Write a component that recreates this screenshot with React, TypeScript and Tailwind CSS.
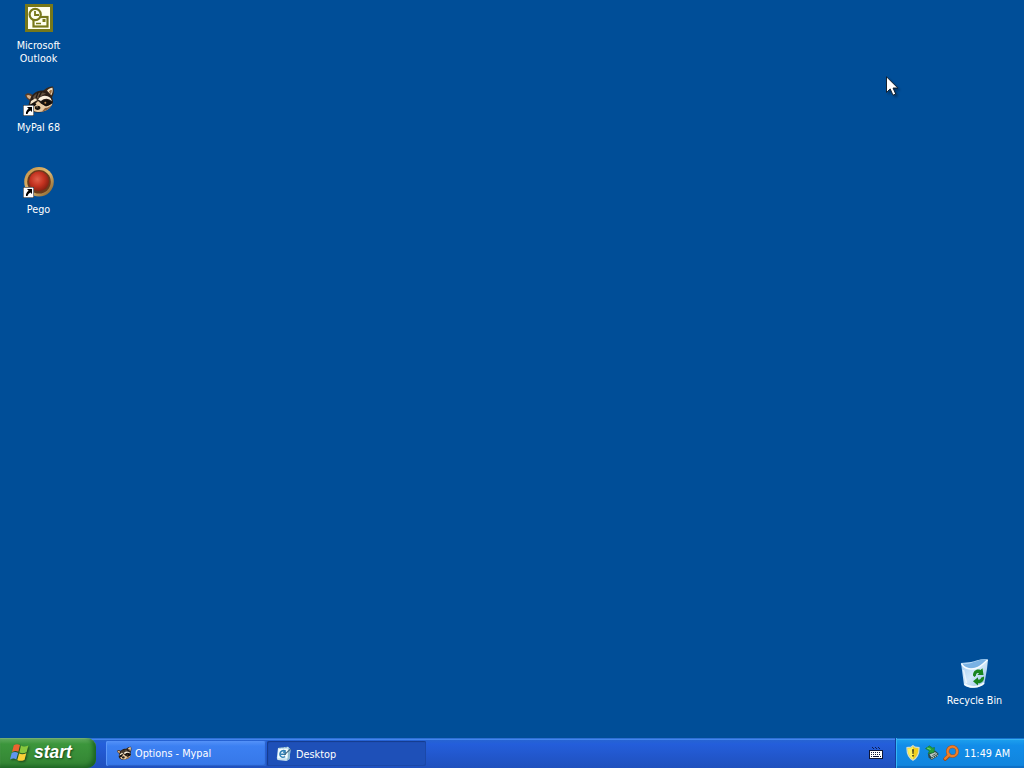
import type { ReactNode } from 'react';

const UI_FONT = "font-['DejaVu_Sans_Condensed','DejaVu_Sans',sans-serif] [font-stretch:condensed]";

function ShortcutArrow() {
  return (
    <g>
      <rect x="0" y="20" width="11" height="11" fill="#1c2530" />
      <rect x="0.6" y="20.6" width="9.8" height="9.8" fill="#fff" />
      <path d="M4 22h5v5l-1.6-1.5C5.8 26.3 4.8 27.4 4.6 29H3C2.7 27 3.6 25 5.6 23.7z" fill="#000" />
    </g>
  );
}

function OutlookIcon() {
  return (
    <svg width="32" height="32" viewBox="0 0 32 32">
      <rect x="2" y="1" width="28" height="28" fill="#77781a" />
      <rect x="5" y="4" width="22" height="22" fill="#fffff0" />
      <rect x="10.5" y="14" width="14" height="9.5" fill="#fffff0" stroke="#77781a" strokeWidth="2.2" />
      <rect x="19.5" y="16" width="3" height="3" fill="#77781a" />
      <path d="M13 20.5h5" stroke="#77781a" strokeWidth="1.5" />
      <circle cx="12.2" cy="11.5" r="5.6" fill="#fffff0" stroke="#77781a" strokeWidth="2.2" />
      <path d="M12 8v4h4" fill="none" stroke="#77781a" strokeWidth="1.8" />
    </svg>
  );
}

function RaccoonArt() {
  return (
    <g>
      {/* ears */}
      <path d="M2 10C4 7 8 8 11 11L9 17C6 15 3 14 2 10z" fill="#5b3d26" />
      <path d="M3.5 10.5C5.5 9 8 10.5 9 12.5L7.5 14.5C5.5 13.5 4 12.5 3.5 10.5z" fill="#d9b186" />
      <path d="M20 6C22 3.5 26 1 30 1.5 31.5 6 31 10 28.5 13z" fill="#3a281a" />
      <path d="M24 5.5C26 3.5 28 2.5 29.5 2.7 30 6 29.5 8.5 28 10.5z" fill="#f1dfc0" />
      <path d="M26 6.5C27 5.2 28 4.8 28.8 5 28.9 7 28.4 8.5 27.6 9.3z" fill="#9c6b3b" />
      {/* head */}
      <path d="M7 15C8 9 14 5 20 5.5 26 6 30 11 30 17 29 23 23 27 15 27.5 9 27.5 5 24 5.5 20z" fill="#2b2019" />
      <path d="M10 12C13 7.5 19 6.5 23 8.5L20 10 16 12.5 11 15z" fill="#61503f" />
      <path d="M15 7.5L13 13M18.5 7L16 12" stroke="#211912" strokeWidth="1.3" />
      {/* brow stripes */}
      <path d="M8 16L12 13.5 14.5 15 11 17 7 20z" fill="#f3e4cb" />
      <path d="M15 14.5C18 10.5 23 9.5 27.5 13L29 16C26 13.2 21.5 12.5 18 16z" fill="#faf0de" />
      {/* muzzle and cheeks */}
      <path d="M11 20L15 16 18 18.5 23 21.5 29.5 18.5C28 23.5 23 26.5 16 27 12 27 9 25.5 8.5 23z" fill="#e8caa2" />
      <path d="M22 23C25 23 27 21.5 29 19.5 27.5 23 24 25.8 19 26.5z" fill="#8b603e" />
      {/* mask */}
      <path d="M17.5 18C20 14 25.5 13.5 29 17.5 27.5 20 25 21.5 22.5 21z" fill="#15100d" />
      <path d="M7 19.5L11.5 17.5 13.5 19.5 10.5 22 7.5 22z" fill="#15100d" />
      <circle cx="22.3" cy="17.8" r="1" fill="#c28c50" />
      <ellipse cx="14.6" cy="22.8" rx="2.8" ry="2.1" fill="#17120e" />
      <path d="M13.3 21.9h1.6" stroke="#c4a886" strokeWidth="0.8" />
    </g>
  );
}

function MyPalIcon() {
  return (
    <svg width="32" height="32" viewBox="0 0 32 32">
      <RaccoonArt />
      <ShortcutArrow />
    </svg>
  );
}

function PegoIcon() {
  return (
    <svg width="32" height="32" viewBox="0 0 32 32">
      <defs>
        <linearGradient id="pego-rim" x1="0" y1="0" x2="1" y2="1">
          <stop offset="0" stopColor="#c18c3e" />
          <stop offset="0.5" stopColor="#e0bb74" />
          <stop offset="1" stopColor="#76501f" />
        </linearGradient>
        <radialGradient id="pego-ball" cx="0.42" cy="0.4" r="0.62">
          <stop offset="0" stopColor="#e0604a" />
          <stop offset="0.55" stopColor="#c43220" />
          <stop offset="1" stopColor="#842012" />
        </radialGradient>
      </defs>
      <circle cx="16" cy="14.8" r="14.8" fill="url(#pego-rim)" />
      <circle cx="16" cy="14.8" r="11.8" fill="#6b3a1c" />
      <circle cx="16" cy="14.3" r="10" fill="url(#pego-ball)" />
      <ShortcutArrow />
    </svg>
  );
}

function RecycleBinIcon() {
  return (
    <svg width="32" height="32" viewBox="0 0 32 32">
      <defs>
        <linearGradient id="bin-body" x1="0" y1="0" x2="1" y2="1">
          <stop offset="0" stopColor="#9fcaf0" />
          <stop offset="0.5" stopColor="#d3e9fa" />
          <stop offset="1" stopColor="#8bb9df" />
        </linearGradient>
      </defs>
      <path d="M2 5L12 4C17 3 23 -0.5 29 1.5L28 11 25.5 25C22 30 10 31.5 5 27z" fill="url(#bin-body)" />
      <path d="M3 6C10 7 13 4 18 3 22 1 26 0.5 28.5 2 25 5 22 8 19 9.5 14 11.5 6 11 3 6z" fill="#79b2e4" />
      <path d="M2.5 5.5C5 11.5 14 12 19 9.5 22 8 25 5 28.5 2" fill="none" stroke="#f6fcff" strokeWidth="1.5" />
      <path d="M4.5 12L7.5 25" stroke="#fff" strokeWidth="1.5" opacity="0.6" />
      <path d="M5.5 26C11 30.5 20 29.5 25 25" fill="none" stroke="#f3fbff" strokeWidth="1.8" />
      {/* two chasing arrows */}
      <g fill="#17851e">
        <path d="M14 17.5C14 13 17.5 10.5 21.5 12L23.5 10.3 24.5 17 18.3 17 20 15.2C18 14.6 17 15.5 17 17.5L15.5 19z" />
        <path d="M25 18.5C25.5 23 22.5 25.5 19 25.3V27.5L14 23.2 19 19.2V21.5C21 21.8 22 21 22 19.8z" />
      </g>
    </svg>
  );
}

function WindowsFlag() {
  return (
    <svg width="20" height="20" viewBox="0 0 20 20" className="shrink-0 drop-shadow-[1px_1px_1px_rgba(0,0,0,0.55)]">
      <path d="M3.8 2.2C6 .8 8 .9 10 2L8.4 8.7C6.3 7.6 4.2 7.7 2 8.9z" fill="#ec6430" />
      <path d="M11 2.6C13 3.8 15.3 3.7 18.4 2.4L16.6 9.2C13.8 10.5 11.4 10.5 9.4 9.3z" fill="#88c83e" />
      <path d="M1.7 10C4 8.7 6 8.8 8.1 9.9L6.3 16.4C4.2 15.2 2.2 15.4 0 16.5z" fill="#6096ee" />
      <path d="M9.1 10.5C11.2 11.6 13.4 11.6 16.3 10.3L14.5 16.9C11.5 18.2 9.2 18.1 7.3 17z" fill="#fad038" />
    </svg>
  );
}

function DesktopPadIcon() {
  return (
    <svg width="16" height="16" viewBox="0 0 16 16" className="-mt-[2px]">
      <path d="M2 2L12 .8 14.5 3.5 13.5 13 10.5 15 1.5 14 .8 12z" fill="#c9e2ee" />
      <path d="M2.5 3h9.3v9.3H1.6z" fill="#f4fdff" />
      <path d="M12.4 2L14.5 3.5 13.5 13 10.5 15 11.6 12z" fill="#8fbdd2" />
      <path d="M9.8 5.2C7 3.6 4 5.3 3.9 8S6.2 12 9.2 10.6M4.8 8.2h4.4V6.2L7 5.9" fill="none" stroke="#2f7fb4" strokeWidth="1.5" />
      <path d="M14.5 3L8 9.2" stroke="#456a80" strokeWidth="1.1" />
      <path d="M3.5 1.8h1M6.5 1.6h1M9.5 1.4h1" stroke="#5d8c9c" strokeWidth="1" />
    </svg>
  );
}

function KeyboardIcon() {
  return (
    <svg width="14" height="14" viewBox="0 0 14 14" shapeRendering="crispEdges">
      <path d="M3 0h1v1h1v1H4V1H3zM6 0h1v1h1v1H7V1H6zM9 0h1v1h1v1h-1V1H9z" fill="#101c50" />
      <rect x="0" y="3" width="14" height="9" fill="#0c1538" />
      <rect x="1" y="4" width="12" height="7" fill="#fff" />
      <path d="M2 5.5h10M2 7.5h10" stroke="#0c1538" strokeDasharray="1 1" />
      <path d="M2 9.5h1M4 9.5h6M11 9.5h1" stroke="#0c1538" />
    </svg>
  );
}

function ShieldIcon() {
  return (
    <svg width="16" height="16" viewBox="0 0 16 16">
      <path d="M8 .6L10 2.2 14 2.6C14.3 8 12.8 12.5 8 15.3 3.2 12.5 1.7 8 2 2.6L6 2.2z" fill="#f1cf1e" stroke="#d3dccb" strokeWidth="1.2" />
      <path d="M8 1.8L6.2 3.2 3 3.6C2.9 8 4.1 11.8 8 14.2z" fill="#fdf15c" />
      <path d="M7.1 4.2h1.8L8.5 9h-1zM7.2 10h1.6v1.6H7.2z" fill="#3d3b18" />
    </svg>
  );
}

function HardwareIcon() {
  return (
    <svg width="16" height="16" viewBox="0 0 16 16">
      <path d="M4 9L11 5.5 14.5 8.5 14 11 7.5 15 4.5 12.5z" fill="#2b4a4b" />
      <path d="M5.5 9.6L11 7 13.5 9 7.8 12.4z" fill="#bcc8c3" />
      <path d="M8.3 10.6l3.4-1.8" stroke="#40544f" strokeWidth="0.9" />
      <path d="M7.5 13.8l6.5-3.6" stroke="#d2d8c8" strokeWidth="1.1" strokeDasharray="1 1" />
      <path d="M1.5 3.5L5.5 .8 8.5 3 10.5 2.5 10 7.5 4 8.5 5.5 6z" fill="#27a03c" stroke="#147134" strokeWidth="0.6" />
      <path d="M3.2 3L6.8 4.6" stroke="#72d472" strokeWidth="1.1" />
    </svg>
  );
}

function MagnifierIcon() {
  return (
    <svg width="16" height="16" viewBox="0 0 16 16">
      <path d="M6.3 9.9L2.2 14" stroke="#9c4815" strokeWidth="3.8" strokeLinecap="round" />
      <circle cx="9.4" cy="6.4" r="4.8" fill="none" stroke="#a8501c" strokeWidth="3.2" />
      <path d="M6.3 9.6L2.2 13.7" stroke="#ee7d24" strokeWidth="2.4" strokeLinecap="round" />
      <circle cx="9.4" cy="6.4" r="4.8" fill="none" stroke="#ee7f27" strokeWidth="2.2" />
    </svg>
  );
}

function DesktopIcon({ icon, children }: { icon: ReactNode; children: ReactNode }) {
  return (
    <div className="flex h-[82px] w-[77px] flex-col items-center text-center text-[10.7px] leading-[13px] text-white">
      {icon}
      <span className="mt-[4px] whitespace-nowrap">{children}</span>
    </div>
  );
}

function TaskButton({ icon, label, active }: { icon: ReactNode; label: string; active?: boolean }) {
  return (
    <button
      className={`flex h-[25px] items-center rounded-[2px] text-left text-[10.8px] text-white ${
        active
          ? 'w-[159px] gap-[4px] bg-[#1e50b8] pt-[3px] pl-[9px] shadow-[inset_1px_1px_1px_#153b8c,inset_-1px_-1px_0_#1b48a8]'
          : 'w-40 gap-[3px] bg-linear-to-b from-[#5492f8] via-[#3c80f2] via-20% to-[#3677e8] pt-px pl-[10px] shadow-[inset_1px_0_0_#5d99fa,inset_-1px_-1px_1px_#285fc7]'
      }`}
    >
      {icon}
      <span>{label}</span>
    </button>
  );
}

export default function App() {
  return (
    <div className={`relative flex h-[768px] w-[1024px] cursor-default flex-col overflow-hidden bg-[#004e98] select-none ${UI_FONT}`}>
      {/* desktop */}
      <main className="flex min-h-0 flex-1 justify-between">
        <div className="flex flex-col pt-[3px]">
          <DesktopIcon icon={<OutlookIcon />}>
            Microsoft
            <br />
            Outlook
          </DesktopIcon>
          <DesktopIcon icon={<MyPalIcon />}>MyPal 68</DesktopIcon>
          <DesktopIcon icon={<PegoIcon />}>Pego</DesktopIcon>
        </div>
        <div className="flex flex-col pt-[658px] pr-[11px]">
          <DesktopIcon icon={<RecycleBinIcon />}>Recycle Bin</DesktopIcon>
        </div>
      </main>

      {/* taskbar */}
      <footer className="flex h-[30px] shrink-0 bg-linear-to-b from-[#2866ce] via-[#245edb] via-20% to-[#1f50bd] shadow-[inset_0_1px_0_#2e6fd6,inset_0_2px_0_#4287ef]">
        <button className="flex w-24 items-center rounded-r-[9px] bg-linear-to-b from-[#63ad62] via-[#3c963c] via-20% to-[#338333] pl-[10px] shadow-[inset_-3px_-2px_4px_#1b6322,inset_0_1px_1px_#83bb80]">
          <WindowsFlag />
          <span className="ml-[4px] font-['Liberation_Sans',sans-serif] text-[17.5px] leading-none font-bold text-white italic [font-stretch:normal] [text-shadow:1px_1px_2px_#174718]">
            start
          </span>
        </button>
        <div className="flex flex-1 gap-px pt-[3px] pl-[10px]">
          <TaskButton
            icon={
              <svg width="16" height="16" viewBox="0 0 32 32">
                <RaccoonArt />
              </svg>
            }
            label="Options - Mypal"
          />
          <TaskButton icon={<DesktopPadIcon />} label="Desktop" active />
        </div>
        <div className="flex items-center pt-[2px] pr-[12px]">
          <KeyboardIcon />
        </div>
        <div className="flex w-[129px] items-center gap-[3px] border-l border-[#123f9f] bg-linear-to-b from-[#20a4ee] via-[#128de9] via-25% to-[#1184dc] pl-[9px] shadow-[inset_1px_0_0_#35b8f5,inset_0_1px_0_#1674cf,inset_0_2px_0_#36b1f2,inset_0_-2px_1px_#0e6fc6]">
          <ShieldIcon />
          <HardwareIcon />
          <MagnifierIcon />
          <span className="mt-[2px] ml-[2px] text-[10.8px] whitespace-nowrap text-white">11:49 AM</span>
        </div>
      </footer>

      {/* mouse pointer */}
      <svg width="14" height="22" viewBox="0 0 14 22" className="absolute top-[76px] left-[886px] drop-shadow-[2px_2px_1px_rgba(0,0,0,0.3)]">
        <path d="M.5 .8V16.4L4.2 12.9 7 19.2 9.7 18 7 12h4.8z" fill="#fff" stroke="#0a1420" strokeWidth="0.9" />
      </svg>
    </div>
  );
}
